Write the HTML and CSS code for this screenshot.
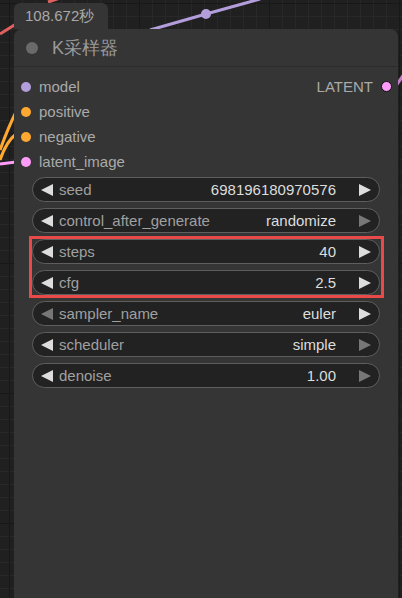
FILE: index.html
```html
<!DOCTYPE html>
<html>
<head>
<meta charset="utf-8">
<link rel="stylesheet" href="styles.css">
</head>
<body>
<div class="canvas">
  <svg class="wires" width="402" height="598" viewBox="0 0 402 598">
    <path d="M0 34 L16 24" stroke="#e06060" stroke-width="3" fill="none"/>
    <path d="M48 2 L60 -2" stroke="#e06060" stroke-width="3" fill="none"/>
    <path d="M150 30 L206 14 L260 -1" stroke="#b39ddb" stroke-width="3" fill="none"/>
    <circle cx="206" cy="14" r="5" fill="#b39ddb"/>
    <path d="M0 150 Q8 128 16 112" stroke="#ffa931" stroke-width="3" fill="none"/>
    <path d="M0 160 Q6 142 16 134" stroke="#ffa931" stroke-width="3" fill="none"/>
    <path d="M0 164 L16 162" stroke="#ff9cf9" stroke-width="3" fill="none"/>
    <path d="M396 86 Q400 80 404 74" stroke="#c27cc8" stroke-width="3" fill="none"/>
  </svg>

  <div class="badge">108.672秒</div>

  <div class="node">
    <div class="title">
      <span class="title-dot"></span>
      <span class="title-text">K采样器</span>
    </div>
    <div class="slots">
      <div class="slot-row">
        <div class="slot in"><span class="dot model"></span>model</div>
        <div class="slot out">LATENT<span class="dot latent out-dot"></span></div>
      </div>
      <div class="slot-row">
        <div class="slot in"><span class="dot cond"></span>positive</div>
      </div>
      <div class="slot-row">
        <div class="slot in"><span class="dot cond"></span>negative</div>
      </div>
      <div class="slot-row">
        <div class="slot in"><span class="dot latent"></span>latent_image</div>
      </div>
    </div>
    <div class="widgets">
      <div class="widget">
        <span class="arrow left"></span><span class="label">seed</span><span class="value">698196180970576</span><span class="arrow right"></span>
      </div>
      <div class="widget">
        <span class="arrow left"></span><span class="label">control_after_generate</span><span class="value">randomize</span><span class="arrow right dim"></span>
      </div>
      <div class="highlight">
        <div class="widget">
          <span class="arrow left"></span><span class="label">steps</span><span class="value">40</span><span class="arrow right"></span>
        </div>
        <div class="widget">
          <span class="arrow left"></span><span class="label">cfg</span><span class="value">2.5</span><span class="arrow right"></span>
        </div>
      </div>
      <div class="widget">
        <span class="arrow left dim"></span><span class="label">sampler_name</span><span class="value">euler</span><span class="arrow right"></span>
      </div>
      <div class="widget">
        <span class="arrow left"></span><span class="label">scheduler</span><span class="value">simple</span><span class="arrow right dim"></span>
      </div>
      <div class="widget">
        <span class="arrow left"></span><span class="label">denoise</span><span class="value">1.00</span><span class="arrow right dim"></span>
      </div>
    </div>
  </div>
</div>
</body>
</html>
```

FILE: styles.css
```css
html, body {
  margin: 0;
  padding: 0;
}
body {
  width: 402px;
  height: 598px;
  overflow: hidden;
  font-family: "Liberation Sans", Arial, sans-serif;
  background-color: #202020;
  background-image:
    linear-gradient(to right, #181818 1px, transparent 1px),
    linear-gradient(to bottom, #181818 1px, transparent 1px),
    linear-gradient(to right, #282828 1px, transparent 1px),
    linear-gradient(to bottom, #282828 1px, transparent 1px);
  background-size: 130px 130px, 130px 130px, 13px 13px, 13px 13px;
  background-position: 9px 3px, 9px 3px, 9px 3px, 9px 3px;
}
.canvas {
  position: relative;
  width: 402px;
  height: 598px;
  overflow: hidden;
}
.wires {
  position: absolute;
  left: 0;
  top: 0;
}
.badge {
  position: absolute;
  left: 14px;
  top: 3px;
  width: 94px;
  height: 26px;
  box-sizing: border-box;
  padding-left: 11px;
  background: #353535;
  border-radius: 6px 6px 0 0;
  color: #a8a8a8;
  font-size: 15px;
  line-height: 25px;
}
.node {
  position: absolute;
  left: 14px;
  top: 29px;
  width: 384px;
  height: 569px;
  background: #353535;
  border-radius: 8px 8px 0 0;
}
.title {
  height: 37px;
  border-bottom: 1px solid #2c2c2c;
  display: flex;
  align-items: center;
  padding-left: 12px;
  gap: 14px;
}
.title-dot {
  width: 12px;
  height: 12px;
  border-radius: 50%;
  background: #6a6a6a;
}
.title-text {
  color: #9a9a9a;
  font-size: 18px;
}
.slots {
  padding-top: 7px;
}
.slot-row {
  height: 25px;
  display: flex;
  align-items: center;
  justify-content: space-between;
}
.slot {
  display: flex;
  align-items: center;
  color: #aaaaaa;
  font-size: 15px;
}
.slot.in {
  padding-left: 7px;
}
.slot.in .dot {
  margin-right: 8px;
}
.slot.out {
  padding-right: 6px;
}
.dot {
  width: 10px;
  height: 10px;
  border-radius: 50%;
  display: inline-block;
}
.dot.model { background: #b39ddb; }
.dot.cond { background: #ffa931; }
.dot.latent { background: #ff9cf9; }
.dot.out-dot {
  margin-left: 8px;
  width: 9px;
  height: 9px;
  border: 1.5px solid #111;
}
.widgets {
  padding: 3px 18px 0 18px;
  display: flex;
  flex-direction: column;
  gap: 6px;
}
.highlight {
  position: relative;
  display: flex;
  flex-direction: column;
  gap: 6px;
}
.highlight::after {
  content: "";
  position: absolute;
  left: -3px;
  right: -4px;
  top: -3px;
  bottom: -3px;
  border: 3px solid #e84a4a;
  pointer-events: none;
}
.widget {
  height: 25px;
  box-sizing: border-box;
  border: 1px solid #5e5e5e;
  border-radius: 12.5px;
  background: #222222;
  display: flex;
  align-items: center;
  padding: 0 8px 0 8px;
  font-size: 15px;
}
.label {
  color: #a0a0a0;
  margin-left: 6px;
  flex: 1;
  white-space: nowrap;
}
.value {
  color: #dddddd;
  margin-right: 23px;
}
.arrow {
  width: 0;
  height: 0;
  border-top: 6px solid transparent;
  border-bottom: 6px solid transparent;
}
.arrow.left {
  border-right: 12px solid #dddddd;
}
.arrow.right {
  border-left: 12px solid #dddddd;
}
.arrow.left.dim {
  border-right-color: #777777;
}
.arrow.right.dim {
  border-left-color: #777777;
}
```
